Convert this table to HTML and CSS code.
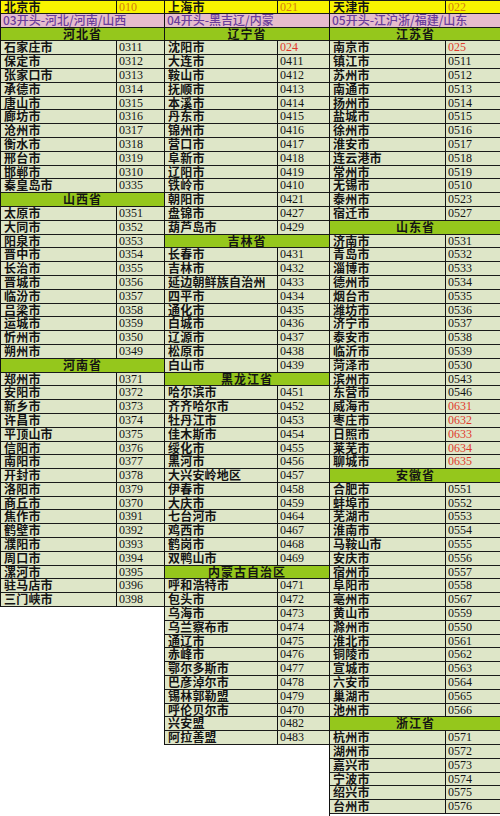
FILE: index.html
```html
<!DOCTYPE html>
<html lang="zh-CN">
<head>
<meta charset="utf-8">
<title>区号表</title>
<link rel="stylesheet" href="styles.css">
</head>
<body>
<div class="sheet">
  <div class="grp l">
    <div class="n y top">北京市</div><div class="c y yc top">010</div>
    <div class="p">03开头-河北/河南/山西</div>
    <div class="g">河北省</div>
    <div class="n">石家庄市</div><div class="c">0311</div>
    <div class="n">保定市</div><div class="c">0312</div>
    <div class="n">张家口市</div><div class="c">0313</div>
    <div class="n">承德市</div><div class="c">0314</div>
    <div class="n">唐山市</div><div class="c">0315</div>
    <div class="n">廊坊市</div><div class="c">0316</div>
    <div class="n">沧州市</div><div class="c">0317</div>
    <div class="n">衡水市</div><div class="c">0318</div>
    <div class="n">邢台市</div><div class="c">0319</div>
    <div class="n">邯郸市</div><div class="c">0310</div>
    <div class="n">秦皇岛市</div><div class="c">0335</div>
    <div class="g">山西省</div>
    <div class="n">太原市</div><div class="c">0351</div>
    <div class="n">大同市</div><div class="c">0352</div>
    <div class="n">阳泉市</div><div class="c">0353</div>
    <div class="n">晋中市</div><div class="c">0354</div>
    <div class="n">长治市</div><div class="c">0355</div>
    <div class="n">晋城市</div><div class="c">0356</div>
    <div class="n">临汾市</div><div class="c">0357</div>
    <div class="n">吕梁市</div><div class="c">0358</div>
    <div class="n">运城市</div><div class="c">0359</div>
    <div class="n">忻州市</div><div class="c">0350</div>
    <div class="n">朔州市</div><div class="c">0349</div>
    <div class="g">河南省</div>
    <div class="n">郑州市</div><div class="c">0371</div>
    <div class="n">安阳市</div><div class="c">0372</div>
    <div class="n">新乡市</div><div class="c">0373</div>
    <div class="n">许昌市</div><div class="c">0374</div>
    <div class="n">平顶山市</div><div class="c">0375</div>
    <div class="n">信阳市</div><div class="c">0376</div>
    <div class="n">南阳市</div><div class="c">0377</div>
    <div class="n">开封市</div><div class="c">0378</div>
    <div class="n">洛阳市</div><div class="c">0379</div>
    <div class="n">商丘市</div><div class="c">0370</div>
    <div class="n">焦作市</div><div class="c">0391</div>
    <div class="n">鹤壁市</div><div class="c">0392</div>
    <div class="n">濮阳市</div><div class="c">0393</div>
    <div class="n">周口市</div><div class="c">0394</div>
    <div class="n">漯河市</div><div class="c">0395</div>
    <div class="n">驻马店市</div><div class="c">0396</div>
    <div class="n">三门峡市</div><div class="c">0398</div>
  </div>
  <div class="grp m">
    <div class="n y top">上海市</div><div class="c y yc top">021</div>
    <div class="p">04开头-黑吉辽/内蒙</div>
    <div class="g">辽宁省</div>
    <div class="n">沈阳市</div><div class="c red">024</div>
    <div class="n">大连市</div><div class="c">0411</div>
    <div class="n">鞍山市</div><div class="c">0412</div>
    <div class="n">抚顺市</div><div class="c">0413</div>
    <div class="n">本溪市</div><div class="c">0414</div>
    <div class="n">丹东市</div><div class="c">0415</div>
    <div class="n">锦州市</div><div class="c">0416</div>
    <div class="n">营口市</div><div class="c">0417</div>
    <div class="n">阜新市</div><div class="c">0418</div>
    <div class="n">辽阳市</div><div class="c">0419</div>
    <div class="n">铁岭市</div><div class="c">0410</div>
    <div class="n">朝阳市</div><div class="c">0421</div>
    <div class="n">盘锦市</div><div class="c">0427</div>
    <div class="n">葫芦岛市</div><div class="c">0429</div>
    <div class="g">吉林省</div>
    <div class="n">长春市</div><div class="c">0431</div>
    <div class="n">吉林市</div><div class="c">0432</div>
    <div class="n">延边朝鲜族自治州</div><div class="c">0433</div>
    <div class="n">四平市</div><div class="c">0434</div>
    <div class="n">通化市</div><div class="c">0435</div>
    <div class="n">白城市</div><div class="c">0436</div>
    <div class="n">辽源市</div><div class="c">0437</div>
    <div class="n">松原市</div><div class="c">0438</div>
    <div class="n">白山市</div><div class="c">0439</div>
    <div class="g">黑龙江省</div>
    <div class="n">哈尔滨市</div><div class="c">0451</div>
    <div class="n">齐齐哈尔市</div><div class="c">0452</div>
    <div class="n">牡丹江市</div><div class="c">0453</div>
    <div class="n">佳木斯市</div><div class="c">0454</div>
    <div class="n">绥化市</div><div class="c">0455</div>
    <div class="n">黑河市</div><div class="c">0456</div>
    <div class="n">大兴安岭地区</div><div class="c">0457</div>
    <div class="n">伊春市</div><div class="c">0458</div>
    <div class="n">大庆市</div><div class="c">0459</div>
    <div class="n">七台河市</div><div class="c">0464</div>
    <div class="n">鸡西市</div><div class="c">0467</div>
    <div class="n">鹤岗市</div><div class="c">0468</div>
    <div class="n">双鸭山市</div><div class="c">0469</div>
    <div class="g">内蒙古自治区</div>
    <div class="n">呼和浩特市</div><div class="c">0471</div>
    <div class="n">包头市</div><div class="c">0472</div>
    <div class="n">乌海市</div><div class="c">0473</div>
    <div class="n">乌兰察布市</div><div class="c">0474</div>
    <div class="n">通辽市</div><div class="c">0475</div>
    <div class="n">赤峰市</div><div class="c">0476</div>
    <div class="n">鄂尔多斯市</div><div class="c">0477</div>
    <div class="n">巴彦淖尔市</div><div class="c">0478</div>
    <div class="n">锡林郭勒盟</div><div class="c">0479</div>
    <div class="n">呼伦贝尔市</div><div class="c">0470</div>
    <div class="n">兴安盟</div><div class="c">0482</div>
    <div class="n">阿拉善盟</div><div class="c">0483</div>
  </div>
  <div class="grp r">
    <div class="n y top">天津市</div><div class="c y yc top">022</div>
    <div class="p">05开头-江沪浙/福建/山东</div>
    <div class="g">江苏省</div>
    <div class="n">南京市</div><div class="c red">025</div>
    <div class="n">镇江市</div><div class="c">0511</div>
    <div class="n">苏州市</div><div class="c">0512</div>
    <div class="n">南通市</div><div class="c">0513</div>
    <div class="n">扬州市</div><div class="c">0514</div>
    <div class="n">盐城市</div><div class="c">0515</div>
    <div class="n">徐州市</div><div class="c">0516</div>
    <div class="n">淮安市</div><div class="c">0517</div>
    <div class="n">连云港市</div><div class="c">0518</div>
    <div class="n">常州市</div><div class="c">0519</div>
    <div class="n">无锡市</div><div class="c">0510</div>
    <div class="n">泰州市</div><div class="c">0523</div>
    <div class="n">宿迁市</div><div class="c">0527</div>
    <div class="g">山东省</div>
    <div class="n">济南市</div><div class="c">0531</div>
    <div class="n">青岛市</div><div class="c">0532</div>
    <div class="n">淄博市</div><div class="c">0533</div>
    <div class="n">德州市</div><div class="c">0534</div>
    <div class="n">烟台市</div><div class="c">0535</div>
    <div class="n">潍坊市</div><div class="c">0536</div>
    <div class="n">济宁市</div><div class="c">0537</div>
    <div class="n">泰安市</div><div class="c">0538</div>
    <div class="n">临沂市</div><div class="c">0539</div>
    <div class="n">菏泽市</div><div class="c">0530</div>
    <div class="n">滨州市</div><div class="c">0543</div>
    <div class="n">东营市</div><div class="c">0546</div>
    <div class="n">威海市</div><div class="c red">0631</div>
    <div class="n">枣庄市</div><div class="c red">0632</div>
    <div class="n">日照市</div><div class="c red">0633</div>
    <div class="n">莱芜市</div><div class="c red">0634</div>
    <div class="n">聊城市</div><div class="c red">0635</div>
    <div class="g">安徽省</div>
    <div class="n">合肥市</div><div class="c">0551</div>
    <div class="n">蚌埠市</div><div class="c">0552</div>
    <div class="n">芜湖市</div><div class="c">0553</div>
    <div class="n">淮南市</div><div class="c">0554</div>
    <div class="n">马鞍山市</div><div class="c">0555</div>
    <div class="n">安庆市</div><div class="c">0556</div>
    <div class="n">宿州市</div><div class="c">0557</div>
    <div class="n">阜阳市</div><div class="c">0558</div>
    <div class="n">亳州市</div><div class="c">0567</div>
    <div class="n">黄山市</div><div class="c">0559</div>
    <div class="n">滁州市</div><div class="c">0550</div>
    <div class="n">淮北市</div><div class="c">0561</div>
    <div class="n">铜陵市</div><div class="c">0562</div>
    <div class="n">宣城市</div><div class="c">0563</div>
    <div class="n">六安市</div><div class="c">0564</div>
    <div class="n">巢湖市</div><div class="c">0565</div>
    <div class="n">池州市</div><div class="c">0566</div>
    <div class="g">浙江省</div>
    <div class="n">杭州市</div><div class="c">0571</div>
    <div class="n">湖州市</div><div class="c">0572</div>
    <div class="n">嘉兴市</div><div class="c">0573</div>
    <div class="n">宁波市</div><div class="c">0574</div>
    <div class="n">绍兴市</div><div class="c">0575</div>
    <div class="n">台州市</div><div class="c">0576</div>
  </div>
</div>
</body>
</html>
```

FILE: styles.css
```css
html, body {
  margin: 0;
  padding: 0;
  background: #ffffff;
}
body {
  font-family: "Noto Sans CJK SC", sans-serif;
  font-size: 12px;
  font-weight: 600;
  color: #141414;
}
.sheet {
  display: flex;
  align-items: flex-start;
  width: 500px;
  height: 816px;
  overflow: hidden;
}
.grp {
  display: grid;
  grid-auto-rows: 13.8px;
  border-left: 1.5px solid #111;
}
.grp.l { grid-template-columns: 115px 48px; }
.grp.m { grid-template-columns: 112px 52px; }
.grp.r {
  grid-template-columns: 115px 56px;
  border-right: 1.5px solid #111;
  align-self: stretch;
}
.grp > div {
  box-sizing: border-box;
  border-bottom: 1px solid #1a1a1a;
  background: #dee6c8;
  line-height: 12.8px;
  white-space: nowrap;
  overflow: hidden;
}
.n {
  padding-left: 3px;
  letter-spacing: 0.2px;
}
.c {
  border-left: 1.5px solid #111;
  padding-left: 2px;
  font-family: "Liberation Serif", serif;
  font-size: 12px;
  font-weight: normal;
}
.top { border-top: 1px solid #1a1a1a; }
.grp > .y { background: #f8f400; }
.grp > .yc { color: #d47c12; }
.grp > .p {
  grid-column: span 2;
  background: #e6bccd;
  color: #6a3c9c;
  padding-left: 2px;
  font-weight: 500;
}
.grp > .g {
  grid-column: span 2;
  background: #95c71c;
  text-align: center;
  letter-spacing: 1px;
}
.red { color: #e03a2c; }
```
